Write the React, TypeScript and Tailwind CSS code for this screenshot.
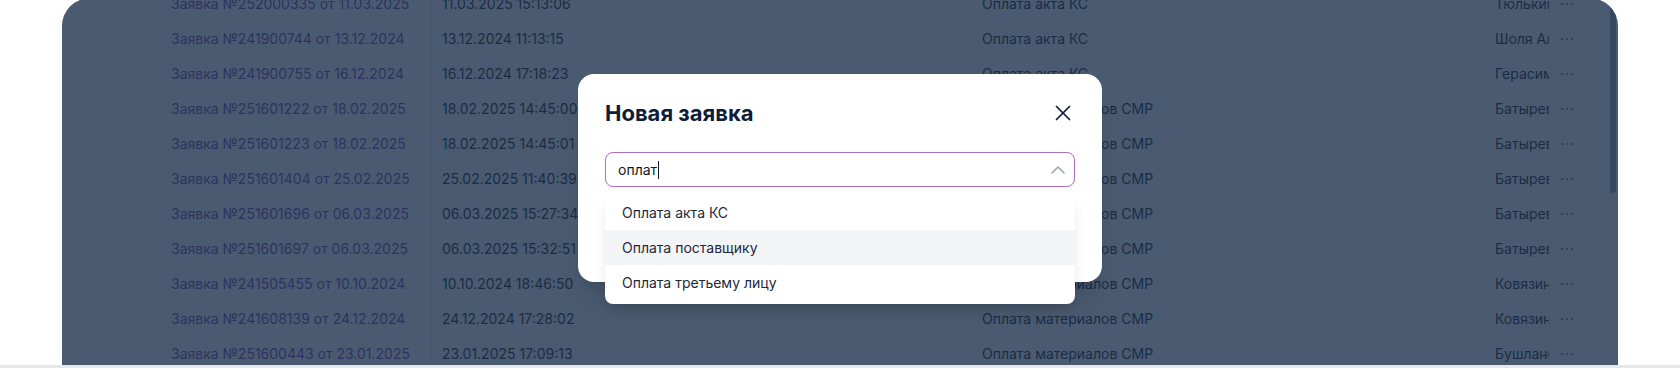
import { X } from 'lucide-react';

const rows = [
  ['Заявка №252000335 от 11.03.2025', '11.03.2025 15:13:06', 'Оплата акта КС', 'Тюлькина Анна'],
  ['Заявка №241900744 от 13.12.2024', '13.12.2024 11:13:15', 'Оплата акта КС', 'Шоля Александр'],
  ['Заявка №241900755 от 16.12.2024', '16.12.2024 17:18:23', 'Оплата акта КС', 'Герасимов Игорь'],
  ['Заявка №251601222 от 18.02.2025', '18.02.2025 14:45:00', 'Оплата материалов СМР', 'Батырев Руслан'],
  ['Заявка №251601223 от 18.02.2025', '18.02.2025 14:45:01', 'Оплата материалов СМР', 'Батырев Руслан'],
  ['Заявка №251601404 от 25.02.2025', '25.02.2025 11:40:39', 'Оплата материалов СМР', 'Батырев Руслан'],
  ['Заявка №251601696 от 06.03.2025', '06.03.2025 15:27:34', 'Оплата материалов СМР', 'Батырев Руслан'],
  ['Заявка №251601697 от 06.03.2025', '06.03.2025 15:32:51', 'Оплата материалов СМР', 'Батырев Руслан'],
  ['Заявка №241505455 от 10.10.2024', '10.10.2024 18:46:50', 'Оплата материалов СМР', 'Ковязин Олег'],
  ['Заявка №241608139 от 24.12.2024', '24.12.2024 17:28:02', 'Оплата материалов СМР', 'Ковязин Олег'],
  ['Заявка №251600443 от 23.01.2025', '23.01.2025 17:09:13', 'Оплата материалов СМР', 'Бушланов Денис'],
];

const options = ['Оплата акта КС', 'Оплата поставщику', 'Оплата третьему лицу'];

const Dots = () => (
  <svg width="12" height="4" viewBox="0 0 12 4" className="text-gray-500">
    <circle cx="1.2" cy="2" r="1.1" fill="currentColor" />
    <circle cx="6" cy="2" r="1.1" fill="currentColor" />
    <circle cx="10.8" cy="2" r="1.1" fill="currentColor" />
  </svg>
);

export default function App() {
  return (
    <div className="flex h-[368px] w-full flex-col overflow-hidden bg-white font-['Inter',sans-serif]">
      <div className="relative mx-[62px] -mt-[2px] flex h-[367px] shrink-0 overflow-hidden rounded-t-[28px] bg-white">
        {/* table body, scrolled */}
        <div className="-mt-[12px] flex-1 overflow-hidden">
          {rows.map((r, i) => (
            <div key={i} className="flex h-[35px] items-center text-sm text-slate-900">
              <div className="flex h-full w-[370px] shrink-0 items-center border-r border-gray-200 pl-[109px] text-[#6a3fb0]">
                {r[0]}
              </div>
              <div className="w-[540px] shrink-0 pl-[10px]">{r[1]}</div>
              <div className="w-[513px] shrink-0 pl-[10px]">{r[2]}</div>
              <div className="w-[64px] shrink-0 overflow-hidden whitespace-nowrap pl-[10px]">{r[3]}</div>
              <div className="flex h-full w-[59px] shrink-0 items-center border-l border-gray-100 pl-[11px]">
                <Dots />
              </div>
            </div>
          ))}
        </div>
        {/* scrollbar */}
        <div className="w-[10px] shrink-0 pt-[9px]">
          <div className="mx-auto h-[186px] w-[6px] rounded-full bg-gray-400" />
        </div>

        {/* overlay + modal */}
        <div className="absolute inset-0 flex justify-center bg-[#1d314c]/80 pt-[76px]">
          <div className="h-[208px] w-[524px] rounded-2xl bg-white px-[27px] pt-[25px] shadow-xl">
            <div className="flex items-center justify-between">
              <h2 className="text-[22px] leading-[28px] font-bold text-[#0f1d3a]">Новая заявка</h2>
              <button className="-mr-px flex h-[26px] w-[26px] items-center justify-center text-[#0f1d3a]">
                <X size={26} strokeWidth={1.6} />
              </button>
            </div>
            <div className="relative mt-[25px]">
              <div className="flex h-[35px] items-center justify-between rounded-lg border-[1.5px] border-[#b06cc2] pl-3 pr-[9px]">
                <div className="flex items-center text-sm text-gray-900">
                  оплат
                  <span className="ml-px h-[18px] w-px bg-gray-900" />
                </div>
                <svg width="14" height="9" viewBox="0 0 14 9" fill="none">
                  <polyline points="1,8 7,2 13,8" stroke="#9ca3af" strokeWidth="1.5" strokeLinecap="round" strokeLinejoin="round" />
                </svg>
              </div>
              <div className="absolute left-0 right-0 top-full mt-[4px] rounded-lg bg-white py-1 shadow-lg">
                {options.map((o, i) => (
                  <div
                    key={o}
                    className={`flex h-[35px] items-center px-[17px] text-sm text-slate-800 ${i === 1 ? 'bg-gray-100' : ''}`}
                  >
                    {o}
                  </div>
                ))}
              </div>
            </div>
          </div>
        </div>
      </div>
      <div className="h-[3px] shrink-0 bg-gray-200" />
    </div>
  );
}
